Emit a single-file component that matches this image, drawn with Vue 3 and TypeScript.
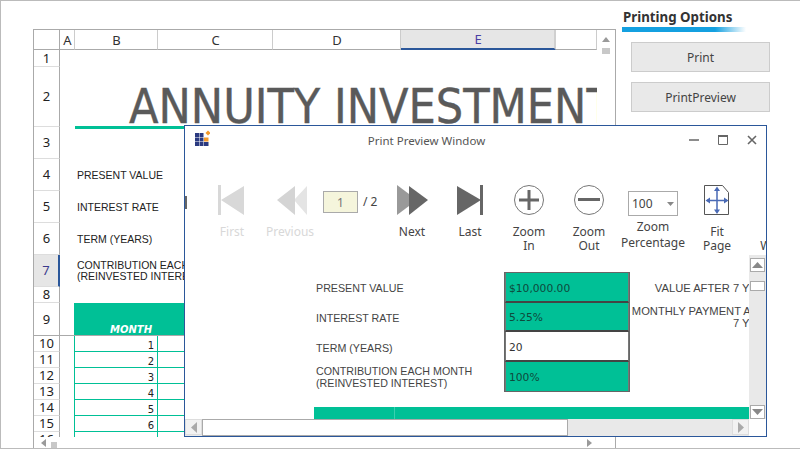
<script setup lang="ts">
const columns = [
  { name: 'A', selected: false },
  { name: 'B', selected: false },
  { name: 'C', selected: false },
  { name: 'D', selected: false },
  { name: 'E', selected: true },
  { name: '', selected: false },
]

const rows = Array.from({ length: 16 }, (_, i) => i + 1)
const months = [1, 2, 3, 4, 5, 6, 7]

const inputs = [
  { value: '$10,000.00', filled: true },
  { value: '5.25%', filled: true },
  { value: '20', filled: false },
  { value: '100%', filled: true },
]
</script>

<template>
  <div class="page">
    <section class="sheet">
      <div class="sheet__grid">
        <div class="corner" />
        <div
          v-for="col in columns"
          :key="col.name"
          class="col-head"
          :class="{ 'col-head--selected': col.selected }"
        >
          {{ col.name }}
        </div>
        <div class="vscroll">
          <svg width="8" height="5" viewBox="0 0 8 5"><path d="M4 0 8 5H0z" fill="#9a9a9a" /></svg>
          <span class="vscroll__thumb" />
        </div>

        <div
          v-for="row in rows"
          :key="row"
          class="row-head"
          :class="{ 'row-head--selected': row === 7, 'row-head--freeze': row === 9 }"
          :style="{ gridRow: row + 1 }"
        >
          {{ row }}
        </div>

        <div class="title">ANNUITY INVESTMENT</div>
        <div class="label label--r4">PRESENT VALUE</div>
        <div class="label label--r5">INTEREST RATE</div>
        <div class="label label--r6">TERM (YEARS)</div>
        <div class="label label--r7">CONTRIBUTION EACH MONTH<br>(REINVESTED INTEREST)</div>

        <div class="freeze" />
        <div class="month-head">MONTH</div>
        <div class="month-head month-head--rest" />

        <template v-for="(month, i) in months" :key="month">
          <div class="month-cell" :style="{ gridRow: i + 11 }">{{ month }}</div>
          <div class="month-next" :style="{ gridRow: i + 11 }" />
        </template>
      </div>

      <div class="hscroll">
        <svg width="5" height="8" viewBox="0 0 5 8"><path d="M0 4 5 0V8z" fill="#9a9a9a" /></svg>
        <span class="hscroll__thumb" />
        <svg class="hscroll__end" width="5" height="8" viewBox="0 0 5 8"><path d="M5 4 0 0V8z" fill="#9a9a9a" /></svg>
      </div>
    </section>

    <aside class="options">
      <h2 class="options__title">Printing Options</h2>
      <div class="options__rule" />
      <button class="options__btn" type="button">Print</button>
      <button class="options__btn" type="button">PrintPreview</button>
    </aside>

    <div class="window">
      <header class="window__bar">
        <svg class="window__icon" width="16" height="17" viewBox="0 0 16 17">
          <path d="M1 3h4v4H1zM5.500 3h4v4h-4zM1 7.500h4v4H1zM5.500 7.500h4v4h-4zM1 12h4v4H1zM5.500 12h4v4h-4zM10 12h4.500v4H10z" fill="#2b3a80" />
          <path d="M10 7.500h4.500v4H10z" fill="#f39a2b" />
          <path d="M14 0.500l2.500 2.500-2.500 2.500-2.500-2.500z" fill="#f39a2b" />
        </svg>
        <span class="window__title">Print Preview Window</span>
        <div class="window__controls">
          <svg width="10" height="10" viewBox="0 0 10 10"><path d="M0 5h10" stroke="#666" stroke-width="1.500" /></svg>
          <svg width="10" height="10" viewBox="0 0 10 10"><path d="M.5 1.500h9v8h-9z" fill="none" stroke="#666" /><path d="M0 1h10" stroke="#666" stroke-width="2" /></svg>
          <svg width="10" height="10" viewBox="0 0 10 10"><path d="M1 1l8 8M9 1l-8 8" stroke="#666" stroke-width="1.600" /></svg>
        </div>
      </header>

      <div class="toolbar">
        <div class="tool tool--nav tool--off">
          <svg width="30" height="32" viewBox="0 0 30 32"><path d="M1 1h3v30H1zM4 16 27 2v29z" fill="#d8d8d8" /></svg>
          <span>First</span>
        </div>
        <div class="tool tool--nav tool--off">
          <svg width="34" height="32" viewBox="0 0 34 32"><path d="M21 2v29l13-15z" transform="matrix(-1 0 0 1 55 0)" fill="#e4e4e4" /><path d="M4 16 22 2v29z" fill="#d4d4d4" /></svg>
          <span>Previous</span>
        </div>
        <div class="pager">
          <span class="pager__input">1</span>
          <span class="pager__total">/ 2</span>
        </div>
        <div class="tool tool--nav">
          <svg width="34" height="32" viewBox="0 0 34 32"><path d="M2 1v30l20-15z" fill="#999" /><path d="M14 2v29l19-15z" fill="#666" /></svg>
          <span>Next</span>
        </div>
        <div class="tool tool--nav">
          <svg width="30" height="32" viewBox="0 0 30 32"><path d="M2 2v29l24-15z" fill="#666" /><path d="M25 1h3v30h-3z" fill="#666" /></svg>
          <span>Last</span>
        </div>
        <div class="tool tool--zoom">
          <svg width="32" height="32" viewBox="0 0 32 32"><circle cx="16" cy="16" r="14.500" fill="none" stroke="#777" /><path d="M6 16h20M16 6v20" stroke="#666" stroke-width="3" /></svg>
          <span>Zoom<br>In</span>
        </div>
        <div class="tool tool--zoom">
          <svg width="32" height="32" viewBox="0 0 32 32"><circle cx="16" cy="16" r="14.500" fill="none" stroke="#777" /><path d="M5 15.500h22" stroke="#666" stroke-width="3" /></svg>
          <span>Zoom<br>Out</span>
        </div>
        <div class="tool tool--percent">
          <div class="percent">
            <span>100</span>
            <svg width="7" height="4" viewBox="0 0 7 4"><path d="M0 0h7L3.500 4z" fill="#888" /></svg>
          </div>
          <span>Zoom<br>Percentage</span>
        </div>
        <div class="tool tool--zoom">
          <svg width="26" height="32" viewBox="0 0 26 32">
            <path d="M.5 1.500h18l6 7v22H.5z" fill="#fff" stroke="#555" />
            <path d="M13 4v22M3 16.500h20" stroke="#4a6ab5" stroke-width="1.500" />
            <path d="M13 2.500l3 4.500h-6zM13 30l3-4.500h-6zM1.500 16.500 6 13.500v6zM24.500 16.500 20 13.500v6z" fill="#4a6ab5" />
          </svg>
          <span>Fit<br>Page</span>
        </div>
        <div class="tool tool--zoom">
          <span class="tool__blank" />
          <span>Fit<br>Width</span>
        </div>
      </div>

      <div class="preview">
        <div class="doc">
          <div class="doc__sheet">
            <div class="doc__labels">
              <span>PRESENT VALUE</span>
              <span>INTEREST RATE</span>
              <span>TERM (YEARS)</span>
              <span class="doc__two-line">CONTRIBUTION EACH MONTH<br>(REINVESTED INTEREST)</span>
            </div>
            <div class="doc__inputs">
              <div
                v-for="item in inputs"
                :key="item.value"
                class="doc__input"
                :class="{ 'doc__input--filled': item.filled }"
              >
                {{ item.value }}
              </div>
            </div>
            <div class="doc__results">
              <div class="doc__results-inner">
                <span class="doc__result">VALUE AFTER 7 YEARS</span>
                <span class="doc__result">MONTHLY PAYMENT AFTER<br>7 YEARS</span>
              </div>
            </div>
          </div>
          <div class="doc__band"><span class="doc__band-gap" /></div>
        </div>
        <div class="doc-vscroll">
          <span class="sbtn"><svg width="11" height="6" viewBox="0 0 11 6"><path d="M5.500 0 11 6H0z" fill="#888" /></svg></span>
          <span class="doc-vscroll__thumb" />
          <span class="sbtn sbtn--end"><svg width="11" height="6" viewBox="0 0 11 6"><path d="M5.500 6 11 0H0z" fill="#888" /></svg></span>
        </div>
      </div>

      <div class="doc-hscroll">
        <span class="sbtn sbtn--h"><svg width="6" height="11" viewBox="0 0 6 11"><path d="M0 5.500 6 0V11z" fill="#aaa" /></svg></span>
        <span class="doc-hscroll__thumb" />
        <span class="sbtn sbtn--h"><svg width="6" height="11" viewBox="0 0 6 11"><path d="M6 5.500 0 0V11z" fill="#aaa" /></svg></span>
        <span class="doc-hscroll__corner" />
      </div>

      <span class="window__tick" />
    </div>
  </div>
</template>

<style>
body {
  background: #fff;
}
</style>

<style scoped>
.page {
  position: relative;
  display: flex;
  box-sizing: border-box;
  width: 800px;
  height: 449px;
  padding: 28px 0 0 32px;
  overflow: hidden;
  background: #fff;
  border-top: 1px solid #bbb;
  border-bottom: 1px solid #bbb;
  border-left: 1px solid #bbb;
  font-family: "Noto Sans", "Open Sans", sans-serif;
}

.sheet {
  flex: none;
  display: flex;
  flex-direction: column;
  box-sizing: border-box;
  width: 583px;
  height: 420px;
  border-top: 1px solid #aaa;
  border-left: 1px solid #aaa;
  border-right: 1px solid #aaa;
}

.sheet__grid {
  display: grid;
  grid-template-columns: 26px 15px 83px 115px 128px 155px 41px 18px;
  grid-template-rows: 20px 17px 60px 32px 32px 32px 32px 32px 16px 33px repeat(7, 16px);
  height: 407px;
  overflow: hidden;
  flex: none;
}

.corner,
.col-head {
  box-sizing: border-box;
  grid-row: 1;
  border-bottom: 1px solid #aaa;
}

.corner {
  border-right: 1px solid #aaa;
}

.col-head {
  display: flex;
  align-items: center;
  justify-content: center;
  padding-left: 1px;
  border-right: 1px solid #ccc;
  font-size: 13px;
  color: #333;
}

.col-head:last-of-type {
  border-right: 0;
}

.col-head--selected {
  background: #e6e6e6;
  color: #4a3fa5;
  border-bottom: 2px solid #2b579a;
  border-right: 2px solid #d0d0d0;
}

.vscroll {
  grid-column: 8;
  grid-row: 1 / span 3;
  display: flex;
  flex-direction: column;
  align-items: center;
  gap: 6px;
  padding-top: 7px;
}

.vscroll__thumb {
  width: 8px;
  height: 6px;
  background: #c8c8c8;
}

.row-head {
  grid-column: 1;
  box-sizing: border-box;
  display: flex;
  align-items: center;
  justify-content: center;
  border-right: 1px solid #aaa;
  border-bottom: 1px solid #ddd;
  font-size: 13px;
  line-height: 15px;
  color: #222;
}

.row-head--selected {
  background: #e6e6e6;
  color: #3a3a8c;
  border-right: 2px solid #2b579a;
}

.row-head--freeze {
  border-bottom-color: #aaa;
}

.title {
  grid-column: 3 / span 5;
  grid-row: 3;
  box-sizing: border-box;
  margin-bottom: -2px;
  padding: 14px 0 0 54px;
  border-bottom: 3px solid #00c096;
  overflow: hidden;
  white-space: nowrap;
  font-family: "DejaVu Sans Condensed", "DejaVu Sans", sans-serif;
  font-stretch: condensed;
  font-size: 48px;
  line-height: 50px;
  color: #5a5a5a;
  -webkit-text-stroke: 0.4px #5a5a5a;
}

.label {
  grid-column: 3 / span 3;
  align-self: center;
  padding-left: 2px;
  font-family: "Liberation Sans", sans-serif;
  font-size: 10.500px;
  line-height: 11px;
  color: #222;
}

.label--r4 { grid-row: 5; }
.label--r5 { grid-row: 6; }
.label--r6 { grid-row: 7; }
.label--r7 { grid-row: 8; }

.freeze {
  grid-column: 2 / span 6;
  grid-row: 10;
  border-bottom: 1px solid #aaa;
}

.month-head {
  grid-column: 3;
  grid-row: 10;
  display: flex;
  align-items: flex-end;
  justify-content: center;
  margin: 0 0 1px -1px;
  padding: 0 0 0 30px;
  background: #00c096;
  font-family: "DejaVu Sans", sans-serif;
  font-size: 10px;
  font-weight: 700;
  font-style: italic;
  color: #fff;
}

.month-head--rest {
  grid-column: 4;
  margin-left: 0;
}

.month-cell {
  grid-column: 3;
  box-sizing: border-box;
  margin-left: -1px;
  padding: 3px 3px 0 0;
  border: 1px solid #00c096;
  border-top: 0;
  text-align: right;
  font-family: "DejaVu Sans", sans-serif;
  font-size: 10px;
  line-height: 13px;
  color: #222;
}

.month-next {
  grid-column: 4;
  border-bottom: 1px solid #00c096;
}

.hscroll {
  flex: 1;
  display: flex;
  align-items: center;
  gap: 5px;
  padding-left: 7px;
}

.hscroll__thumb {
  align-self: flex-end;
  width: 6px;
  height: 7px;
  background: #c8c8c8;
}

.hscroll__end {
  margin-left: 525px;
}

.options {
  flex: 1;
  display: flex;
  flex-direction: column;
  margin-top: -28px;
  padding: 7px 0 0 6px;
}

.options__title {
  margin: 0 0 0 1px;
  font-size: 13.300px;
  line-height: 19px;
  font-weight: 700;
  color: #333;
}

.options__rule {
  width: 124px;
  height: 5px;
  background: linear-gradient(to right, #14a0e0 0, #14a0e0 75%, #fff 100%);
}

.options__btn {
  box-sizing: border-box;
  width: 139px;
  height: 30px;
  margin: 10px 0 0 9px;
  padding: 0;
  background: #e9e9e9;
  border: 1px solid #ccc;
  font-family: inherit;
  font-size: 12px;
  color: #444;
}

.window {
  position: absolute;
  z-index: 2;
  left: 183px;
  top: 124px;
  box-sizing: border-box;
  display: flex;
  flex-direction: column;
  width: 583px;
  height: 312px;
  background: #fff;
  border: 1px solid #2b579a;
  overflow: hidden;
}

.window__tick {
  position: absolute;
  left: 0;
  top: 70px;
  width: 2px;
  height: 13px;
  background: #666;
}

.window__bar {
  position: relative;
  flex: none;
  display: flex;
  align-items: center;
  justify-content: center;
  height: 29px;
  padding-right: 98px;
}

.window__icon {
  position: absolute;
  left: 9px;
  top: 4px;
}

.window__title {
  font-size: 11.500px;
  color: #555;
}

.window__controls {
  position: absolute;
  right: 9px;
  top: 9px;
  display: flex;
  gap: 19px;
}

.toolbar {
  flex: none;
  display: flex;
  height: 100px;
  padding-top: 29px;
  box-sizing: border-box;
  padding-left: 18px;
  white-space: nowrap;
}

.tool {
  flex: none;
  display: flex;
  flex-direction: column;
  align-items: center;
  font-size: 12px;
  line-height: 14px;
  color: #444;
  text-align: center;
}

.tool svg {
  flex: none;
  margin-bottom: 9px;
}

.tool--nav { width: 58px; }
.tool--off { color: #d8d8d8; }
.tool--zoom { width: 60px; }
.tool--percent { width: 68px; }

.tool__blank {
  height: 32px;
  margin-bottom: 9px;
}

.pager {
  flex: none;
  display: flex;
  align-items: flex-start;
  width: 64px;
  padding: 7px 0 0 4px;
  box-sizing: border-box;
}

.pager__input {
  box-sizing: border-box;
  width: 35px;
  height: 22px;
  background: #f5f5dc;
  border: 1px solid #aaa;
  text-align: center;
  font-size: 12px;
  line-height: 22px;
  color: #777;
}

.pager__total {
  margin-left: 5px;
  font-size: 12px;
  line-height: 22px;
  color: #444;
}

.percent {
  display: flex;
  align-items: center;
  justify-content: space-between;
  box-sizing: border-box;
  width: 50px;
  height: 25px;
  margin: 7px 0 3px;
  padding: 0 3px;
  border: 1px solid #aaa;
  font-size: 12px;
  color: #444;
}

.percent svg {
  margin: 0;
}

.tool--percent > span {
  line-height: 16px;
}

.preview {
  flex: 1;
  min-height: 0;
  display: flex;
}

.doc {
  flex: 1;
  min-width: 0;
  padding: 17px 0 0 129px;
  overflow: hidden;
  display: flex;
  flex-direction: column;
}

.doc__sheet {
  display: flex;
  height: 120px;
  flex: none;
}

.doc__labels {
  flex: none;
  display: grid;
  grid-template-rows: repeat(4, 30px);
  width: 190px;
  padding-left: 2px;
  box-sizing: border-box;
  align-items: center;
  font-family: "Liberation Sans", sans-serif;
  font-size: 10.700px;
  color: #444;
}

.doc__labels span {
  padding-top: 2px;
}

.doc__labels .doc__two-line {
  padding-top: 0;
  line-height: 12px;
}

.doc__inputs {
  flex: none;
  box-sizing: border-box;
  display: grid;
  grid-template-rows: repeat(4, 1fr);
  width: 126px;
  border: 1px solid #666;
}

.doc__input {
  display: flex;
  align-items: center;
  padding: 3px 0 0 3px;
  border-left: 1px solid #777;
  border-right: 1px solid #777;
  border-bottom: 2px solid #444;
  font-family: "DejaVu Sans", sans-serif;
  font-size: 10.700px;
  color: #333;
}

.doc__input:last-child {
  border-bottom: 0;
}

.doc__input--filled {
  background: #00c096;
  color: #0f4a3c;
}

.doc__results {
  flex: 1;
  min-width: 0;
  overflow: hidden;
}

.doc__results-inner {
  display: flex;
  flex-direction: column;
  align-items: flex-end;
  width: 150px;
  font-family: "Liberation Sans", sans-serif;
  font-size: 11.200px;
  line-height: 12px;
  text-align: right;
  color: #444;
}

.doc__result {
  display: block;
  white-space: nowrap;
  margin-top: 10px;
}

.doc__result + .doc__result {
  margin-top: 11px;
}

.doc__band {
  flex: none;
  height: 12px;
  margin-top: 15px;
  background: #00c096;
}

.doc__band-gap {
  display: block;
  width: 1px;
  height: 100%;
  margin-left: 80px;
  background: #3ad0b0;
}

.doc-vscroll {
  flex: none;
  display: flex;
  flex-direction: column;
  align-items: center;
  box-sizing: border-box;
  width: 17px;
  padding-top: 3px;
  background: #e9e9e9;
}

.doc-vscroll__thumb {
  box-sizing: border-box;
  width: 15px;
  height: 10px;
  margin-top: 9px;
  background: #fff;
  border: 1px solid #aaa;
}

.sbtn {
  flex: none;
  box-sizing: border-box;
  display: flex;
  align-items: center;
  justify-content: center;
  width: 15px;
  height: 14px;
  background: #fff;
  border: 1px solid #aaa;
}

.sbtn--end {
  margin-top: auto;
}

.sbtn--h {
  width: 17px;
  height: 16px;
  background: #f2f2f2;
  border: 1px solid #ddd;
}

.doc-hscroll {
  flex: none;
  display: flex;
  height: 17px;
  background: #e9e9e9;
}

.doc-hscroll__thumb {
  box-sizing: border-box;
  width: 366px;
  margin-right: 164px;
  background: #fff;
  border: 1px solid #aaa;
}

.doc-hscroll__corner {
  flex: 1;
  background: #fff;
}
</style>
